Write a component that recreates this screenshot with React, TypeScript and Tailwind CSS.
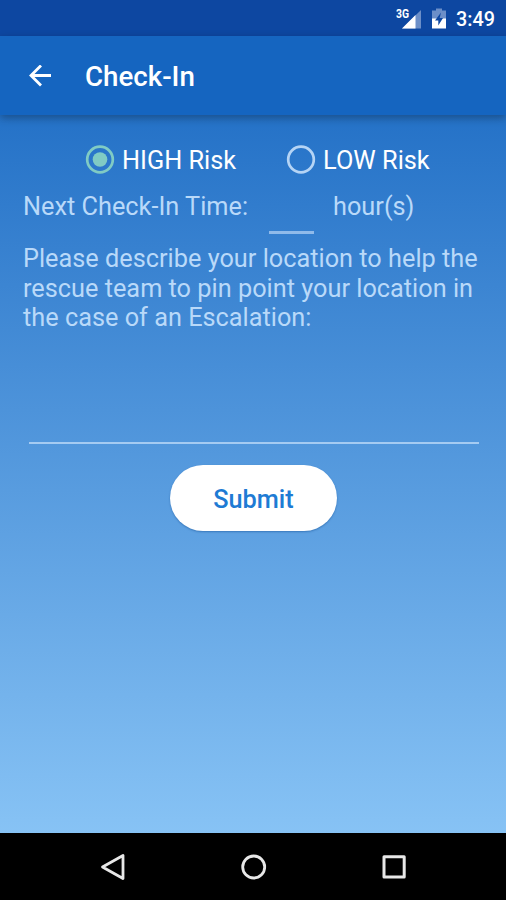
import { useState } from "react";

const risks = [
  { value: "high", label: "HIGH Risk" },
  { value: "low", label: "LOW Risk" },
] as const;

type Risk = (typeof risks)[number]["value"];

function StatusBar() {
  return (
    <div className="flex h-9 shrink-0 items-center justify-end bg-[#0d47a1] pr-[11px] text-white">
      <svg width="28" height="24" viewBox="0 0 28 24" className="mr-[10px]">
        <path d="M28 4V22.5H9Z" fill="#6c8fc8" />
        <path d="M22.5 9V22.5H9Z" fill="#fff" />
        <text x="3" y="11.5" fill="#fff" fontSize="12.5" fontWeight="700" fontFamily="Roboto, sans-serif" textLength="13" lengthAdjust="spacingAndGlyphs">
          3G
        </text>
      </svg>
      <svg width="16" height="22" viewBox="0 0 16 22" className="mr-[9px]">
        <path d="M5 1.5H11V3.5H15V12H1V3.5H5Z" fill="#6c8fc8" />
        <path d="M1 11.5H15V21.5H1Z" fill="#fff" />
        <path d="M10 5.5L4 13.5H7.3V18.5L12 11H8.7Z" fill="#0d47a1" />
      </svg>
      <span className="pt-[3px] text-[19.8px] leading-none font-medium">3:49</span>
    </div>
  );
}

function Toolbar() {
  return (
    <header className="z-10 flex h-[79px] shrink-0 items-center bg-[#1565c0] pl-[29px] text-white shadow-[0_3px_8px_rgba(0,0,0,0.3)]">
      <button type="button" aria-label="Back" className="mr-[34px]">
        <svg width="22" height="22" viewBox="0 0 22 22" fill="none" stroke="currentColor" strokeWidth="2.8">
          <path d="M22.5 10.5H2M12 0.5L2 10.5L12 20.5" />
        </svg>
      </button>
      <h1 className="pt-[2px] text-[27.7px] leading-8 font-medium">Check-In</h1>
    </header>
  );
}

function RadioIcon({ checked }: { checked: boolean }) {
  const color = checked ? "#80cbc4" : "#b5d4f5";

  return (
    <svg width="30" height="30" viewBox="0 0 30 30" className="mr-[7px]">
      <circle cx="15" cy="14.5" r="12.8" fill="none" stroke={color} strokeWidth="2.7" />
      {checked && <circle cx="15" cy="14.5" r="7.3" fill={color} />}
    </svg>
  );
}

function NavigationBar() {
  return (
    <nav className="flex h-[67px] shrink-0 items-center justify-center gap-[112px] bg-black pl-[2px] text-[#e8e8e8]">
      <svg width="28" height="28" viewBox="0 0 28 28" fill="none" stroke="currentColor" strokeWidth="2.8" strokeLinejoin="round">
        <path d="M23 2.5V25.5L2.5 14Z" />
      </svg>
      <svg width="28" height="28" viewBox="0 0 28 28" fill="none" stroke="currentColor" strokeWidth="2.8">
        <circle cx="13.7" cy="14" r="11" />
      </svg>
      <svg width="28" height="28" viewBox="0 0 28 28" fill="none" stroke="currentColor" strokeWidth="3" strokeLinejoin="round">
        <path d="M4 3.7H24.2V23.9H4Z" />
      </svg>
    </nav>
  );
}

export default function App() {
  const [risk, setRisk] = useState<Risk>("high");

  return (
    <div className="flex h-[900px] w-[506px] flex-col overflow-hidden bg-linear-to-b/srgb from-[#1565c0] to-[#90caf9] font-[Roboto,sans-serif]">
      <StatusBar />
      <Toolbar />

      <main className="flex grow flex-col px-[23px] pt-[30px] text-[25.3px] text-[#b9d9f9]">
        <div className="flex gap-[50px] pl-[62px]">
          {risks.map((item) => (
            <label key={item.value} className="flex h-[30px] items-center text-white">
              <input
                type="radio"
                name="risk"
                className="sr-only"
                checked={risk === item.value}
                onChange={() => setRisk(item.value)}
              />
              <RadioIcon checked={risk === item.value} />
              <span className="pt-[2px]">{item.label}</span>
            </label>
          ))}
        </div>

        <div className="mt-4 flex h-[43px] items-start leading-[32px]">
          <span className="w-[246px] whitespace-nowrap">Next Check-In Time:</span>
          <input aria-label="Hours" className="mr-[19px] h-[43px] w-[45px] border-b-[3px] border-[#8fbaea] text-center outline-none" />
          <span>hour(s)</span>
        </div>

        <p className="mt-[10px] -mr-2 leading-[29.5px]">
          Please describe your location to help the rescue team to pin point your location in the case of an Escalation:
        </p>
        <textarea aria-label="Location" className="-mr-px ml-[6px] h-[111px] w-[450px] resize-none border-b-2 border-[#a5cbf2] outline-none" />

        <button
          type="button"
          className="mt-[21px] h-[66px] w-[167px] self-center rounded-full bg-white pt-[5px] pl-px font-medium text-[#1e7bd4] shadow-[0_1px_2px_rgba(0,60,130,0.4)]"
        >
          Submit
        </button>
      </main>

      <NavigationBar />
    </div>
  );
}
